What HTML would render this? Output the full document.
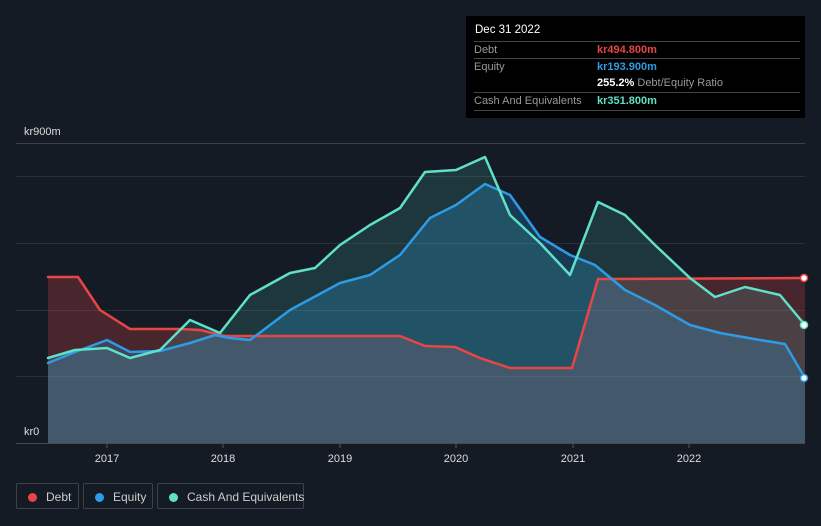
<!DOCTYPE html>
<html><head><style>
body{margin:0;width:821px;height:526px;background:#151b24;font-family:"Liberation Sans",sans-serif;overflow:hidden;position:relative}
.tt{position:absolute;left:466px;top:16px;width:339px;height:102px;background:#000;font-size:11px}
.tt .h{position:absolute;left:9px;top:8px;color:#fff;font-size:11.5px}
.row{position:absolute;left:8px;width:326px;border-top:1px solid #444;height:17px;line-height:17px;color:#999}
.row span{position:absolute;left:123px}
.leg{position:absolute;top:483px;height:26px;border:1px solid #3c424b;border-radius:2px;color:#ccc;font-size:12px;line-height:26px;box-sizing:border-box;white-space:nowrap}
.leg i{display:inline-block;width:9px;height:9px;border-radius:50%;margin:0 9px 0 11px;vertical-align:-1px}
</style></head><body>
<svg width="821" height="526" style="position:absolute;left:0;top:0">
<g stroke="#2a303a" stroke-width="1">
<line x1="16" y1="143.5" x2="805" y2="143.5" stroke="#3a404a"/>
<line x1="16" y1="176.5" x2="805" y2="176.5"/>
<line x1="16" y1="243.5" x2="805" y2="243.5"/>
<line x1="16" y1="310.5" x2="805" y2="310.5"/>
<line x1="16" y1="376.5" x2="805" y2="376.5"/>
</g>
<polygon fill="rgba(230,70,70,0.25)" points="48,443 48,277 78,277 100,310 130,329 180,329 200,330 225,336 400,336 425,346 455,347 480,358 510,368 572,368 598,279 805,278 805,443"/>
<polygon fill="rgba(40,150,230,0.25)" points="48,443 48,363 75,352 107,340 130,352 160,351 190,343 215,335 230,338 250,340 290,310 340,283 370,275 400,255 430,218 456,205 485,184 510,195 540,237 570,255 595,265 625,290 655,305 690,325 720,333 760,340 785,344 805,378 805,443"/>
<polygon fill="rgba(90,220,200,0.15)" points="48,443 48,358 75,350 107,348 130,358 160,350 190,320 220,333 250,295 290,273 315,268 340,245 370,225 400,208 425,172 456,170 485,157 510,215 540,243 570,275 598,202 625,215 655,245 690,278 715,297 745,287 780,295 805,325 805,443"/>
<g fill="none" stroke-width="2.5" stroke-linejoin="round" stroke-linecap="round">
<polyline stroke="#e84545" points="48,277 78,277 100,310 130,329 180,329 200,330 225,336 400,336 425,346 455,347 480,358 510,368 572,368 598,279 805,278"/>
<polyline stroke="#2d9be6" points="48,363 75,352 107,340 130,352 160,351 190,343 215,335 230,338 250,340 290,310 340,283 370,275 400,255 430,218 456,205 485,184 510,195 540,237 570,255 595,265 625,290 655,305 690,325 720,333 760,340 785,344 805,378"/>
<polyline stroke="#5fe0c8" points="48,358 75,350 107,348 130,358 160,350 190,320 220,333 250,295 290,273 315,268 340,245 370,225 400,208 425,172 456,170 485,157 510,215 540,243 570,275 598,202 625,215 655,245 690,278 715,297 745,287 780,295 805,325"/>
</g>
<circle cx="804" cy="278" r="3.5" fill="#fff" stroke="#e84545" stroke-width="1.5"/>
<circle cx="804" cy="378" r="3.5" fill="#fff" stroke="#2d9be6" stroke-width="1.5"/>
<circle cx="804" cy="325" r="3.5" fill="#fff" stroke="#5fe0c8" stroke-width="1.5"/>
<line x1="16" y1="443.5" x2="805" y2="443.5" stroke="#444a54"/>
<g stroke="#555" ><line x1="107" y1="443" x2="107" y2="448"/><line x1="223" y1="443" x2="223" y2="448"/><line x1="340" y1="443" x2="340" y2="448"/><line x1="456" y1="443" x2="456" y2="448"/><line x1="573" y1="443" x2="573" y2="448"/><line x1="689" y1="443" x2="689" y2="448"/></g>
<g fill="#ddd" font-size="11" font-family="Liberation Sans" text-anchor="middle">
<text x="107" y="462">2017</text><text x="223" y="462">2018</text><text x="340" y="462">2019</text><text x="456" y="462">2020</text><text x="573" y="462">2021</text><text x="689" y="462">2022</text>
</g>
<text x="24" y="135" fill="#ddd" font-size="11" font-family="Liberation Sans">kr900m</text>
<text x="24" y="435" fill="#ddd" font-size="11" font-family="Liberation Sans">kr0</text>
</svg>
<div class="tt">
<div class="h">Dec 31 2022</div>
<div class="row" style="top:25px">Debt<span style="color:#e84545;font-weight:bold">kr494.800m</span></div>
<div class="row" style="top:42px">Equity<span style="color:#2d9be6;font-weight:bold">kr193.900m</span></div>
<div class="row" style="top:59px;border:none"><span><b style="color:#fff">255.2%</b> Debt/Equity Ratio</span></div>
<div class="row" style="top:76px">Cash And Equivalents<span style="color:#5fe0c8;font-weight:bold">kr351.800m</span></div>
<div class="row" style="top:94px;height:0"></div>
</div>
<div class="leg" style="left:16px;width:63px"><i style="background:#e84545"></i>Debt</div>
<div class="leg" style="left:83px;width:70px"><i style="background:#2d9be6"></i>Equity</div>
<div class="leg" style="left:157px;width:147px"><i style="background:#5fe0c8"></i>Cash And Equivalents</div>
</body></html>
